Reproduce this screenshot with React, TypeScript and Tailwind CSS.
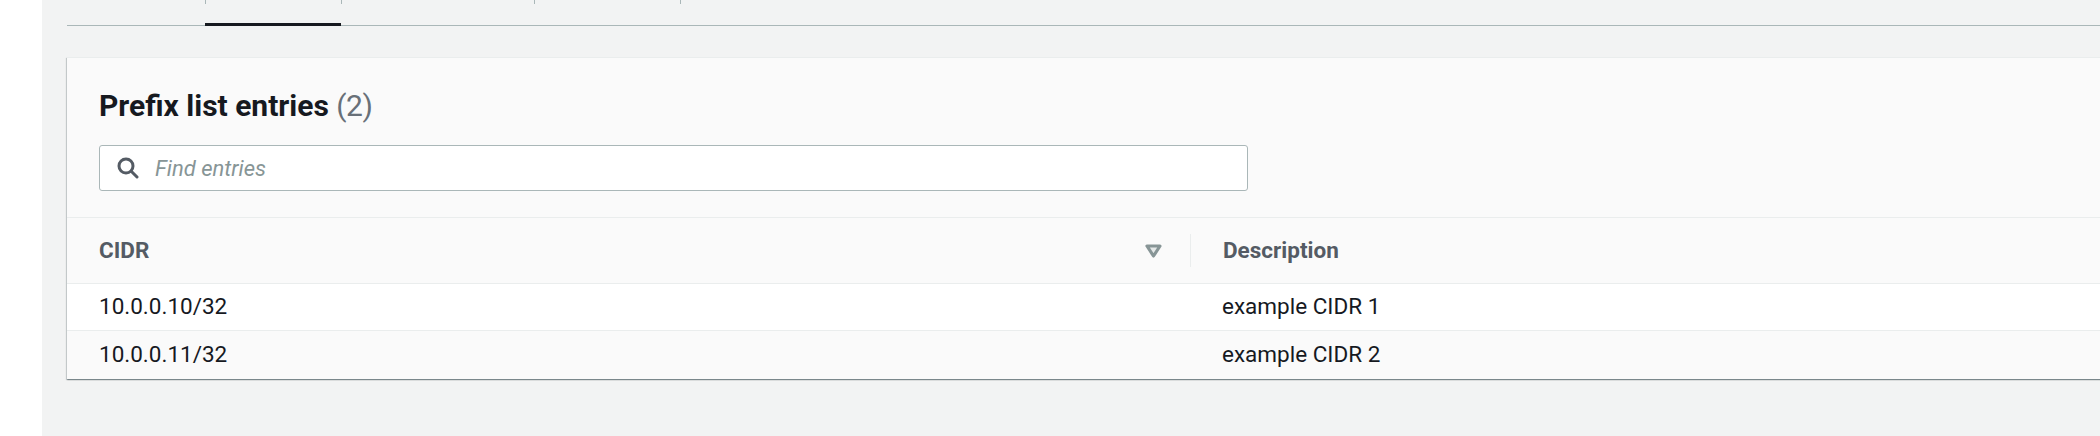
import { FC } from "react";

const font = { fontFamily: "Roboto, 'Liberation Sans', sans-serif" };

interface TabProps {
  width: string;
  active?: boolean;
  first?: boolean;
}

const Tab: FC<TabProps> = ({ width, active, first }) => (
  <div className={`relative flex h-full shrink-0 ${width}`}>
    {!first && <span className="h-[4px] w-px bg-[#aab7b8]" />}
    {active && (
      <span className="absolute left-0 right-0 bottom-[-1px] h-[3px] bg-[#16191f]" />
    )}
  </div>
);

const SearchIcon = () => (
  <svg width="22" height="22" viewBox="0 0 22 22" fill="none">
    <circle cx="9" cy="9" r="7" stroke="#545b64" strokeWidth="3" />
    <path d="M14.5 14.5 L20 20" stroke="#545b64" strokeWidth="3" strokeLinecap="round" />
  </svg>
);

const SortIcon = () => (
  <svg width="17" height="14" viewBox="0 0 17 14" fill="none">
    <path
      d="M2 2 L15 2 L8.5 12 Z"
      stroke="#879596"
      strokeWidth="3.2"
      strokeLinejoin="round"
      fill="#e4e8e8"
    />
  </svg>
);

const rows = [
  { cidr: "10.0.0.10/32", desc: "example CIDR 1", bg: "bg-white" },
  { cidr: "10.0.0.11/32", desc: "example CIDR 2", bg: "bg-[#fafafa]" },
];

export default function App() {
  return (
    <div
      className="flex h-[436px] w-[2100px] overflow-hidden bg-[#f2f3f3] text-[#16191f]"
      style={font}
    >
      <div className="w-[42px] shrink-0 bg-white" />
      <div className="flex min-w-0 flex-1 flex-col pl-[25px]">
        {/* tabs */}
        <div className="flex h-[26px] shrink-0 border-b border-[#aab7b8]">
          <Tab width="w-[138px]" first />
          <Tab width="w-[136px]" active />
          <Tab width="w-[193px]" />
          <Tab width="w-[146px]" />
          <Tab width="w-[200px]" />
        </div>

        {/* card */}
        <div className="mt-[31px] w-[2100px] shrink-0 border-t border-[#eaeded] bg-[#fafafa] shadow-[0_1px_1px_0_rgba(0,28,36,0.3),1px_1px_1px_0_rgba(0,28,36,0.15),-1px_1px_1px_0_rgba(0,28,36,0.15)]">
          <div className="border-b border-[#eaeded] pl-[32px] pt-[30px] pb-[26px]">
            <h2 className="text-[30px] font-bold leading-[36px]">
              Prefix list entries{" "}
              <span className="font-normal text-[#687078] tracking-[-0.5px]">(2)</span>
            </h2>
            <div className="mt-[21px] flex h-[46px] w-[1149px] items-center gap-[16px] rounded-[3px] border border-[#aab7b8] bg-white pl-[17px]">
              <SearchIcon />
              <input
                className="h-full flex-1 bg-transparent text-[22px] outline-none placeholder:italic placeholder:text-[#879596]"
                placeholder="Find entries"
                style={font}
              />
            </div>
          </div>

          {/* table header */}
          <div className="flex h-[66px] items-center border-b border-[#eaeded]">
            <div className="flex w-[1123px] shrink-0 items-center justify-between pl-[32px] pr-[28px]">
              <span className="text-[22.5px] font-bold text-[#545b64]">CIDR</span>
              <SortIcon />
            </div>
            <span className="h-[33px] w-px bg-[#eaeded]" />
            <span className="pl-[32px] text-[22.5px] font-bold text-[#545b64]">
              Description
            </span>
          </div>

          {/* rows */}
          {rows.map((r, i) => (
            <div
              key={r.cidr}
              className={`flex items-center text-[22.5px] ${r.bg} ${
                i === 0 ? "h-[47px] border-b border-[#eaeded]" : "h-[48px]"
              }`}
            >
              <span className="w-[1124px] shrink-0 pl-[32px]">{r.cidr}</span>
              <span className="pl-[31px]">{r.desc}</span>
            </div>
          ))}
        </div>
      </div>
    </div>
  );
}
